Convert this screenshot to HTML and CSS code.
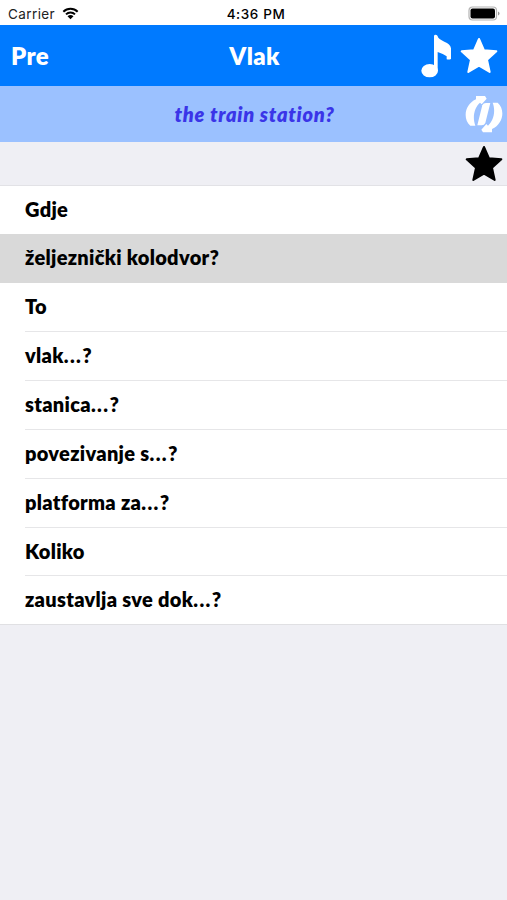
FILE: index.html
```
<!DOCTYPE html>
<html lang="hr">
<head>
    <meta charset="UTF-8">
    <meta name="viewport" content="width=device-width, initial-scale=1.0">
    <title>Vlak</title>
    <link rel="stylesheet" href="styles.css">
</head>
<body>
    <div class="status">
        <div class="carrier">
            <span>Carrier</span>
            <svg class="wifi" viewBox="0 0 51 39">
                <path d="M4 14a31 31 0 0 1 43 0M12 22a19 19 0 0 1 27 0" fill="none" stroke="#000" stroke-width="6"/>
                <path d="M25.500 37l-9-9a13 13 0 0 1 18 0z"/>
            </svg>
        </div>
        <span class="time">4:36 PM</span>
        <svg class="battery" viewBox="0 0 32 15">
            <rect x="1" y="1" width="27.500" height="13" rx="3.500" fill="#fff" stroke="#b4b4b4" stroke-width="1.200"/>
            <rect x="2.500" y="2.500" width="24.500" height="10" rx="2"/>
            <path d="M30 5.500v4q1.500-.5 1.500-2t-1.500-2z" fill="#999"/>
        </svg>
    </div>

    <header class="navbar">
        <span class="back">Pre</span>
        <h1>Vlak</h1>
        <div class="actions">
            <svg class="note" viewBox="40 104 93 132">
                <ellipse cx="66" cy="214" rx="25" ry="20"/>
                <path d="M79 110q0-4 5-4t6 5q2 9 20 16 18 6 20 20v32q-6 3-13 1v-9q-10-8-27-13v57H79z"/>
            </svg>
            <svg class="star" viewBox="0 0 114 114">
                <path d="M57 6l15 34 37 3-28 25 8 37-32-19-32 19 8-37L5 43l37-3z"/>
            </svg>
        </div>
    </header>

    <div class="phrase">
        <span>the train station?</span>
        <svg class="sync" viewBox="174 31 114 114">
            <path d="M207 34h27l5 8-15 17-5-5c-16 14-24 42-14 69h-15c-23-20-18-63 17-79z"/>
            <path d="M255 143h-27l-5-8 15-17 5 5c16-14 24-42 14-69h15c23 20 18 63-17 79z"/>
            <path d="M226 62q3-7 11-7h13l-15 60q-3 7-11 7h-13z"/>
        </svg>
    </div>

    <div class="toolbar">
        <svg class="star dark" viewBox="0 0 114 114">
            <path d="M57 6l15 34 37 3-28 25 8 37-32-19-32 19 8-37L5 43l37-3z"/>
        </svg>
    </div>

    <ul class="list">
        <li><div>Gdje</div></li>
        <li class="selected"><div>željeznički kolodvor?</div></li>
        <li><div>To</div></li>
        <li><div>vlak<span class="dots">...</span>?</div></li>
        <li><div>stanica<span class="dots">...</span>?</div></li>
        <li><div>povezivanje s<span class="dots">...</span>?</div></li>
        <li><div>platforma za<span class="dots">...</span>?</div></li>
        <li><div>Koliko</div></li>
        <li><div>zaustavlja sve dok<span class="dots">...</span>?</div></li>
    </ul>
</body>
</html>
```
FILE: styles.css
```
* {
    box-sizing: border-box;
}

body {
    margin: 0;
    height: 900px;
    background-color: #efeff4;
    font-family: Lato, sans-serif;
    font-weight: 800;
    overflow: hidden;
}

.status {
    display: grid;
    grid-template-columns: 1fr auto 1fr;
    align-items: center;
    height: 25px;
    padding: 2px 7px 0 8px;
    background-color: #fff;
    font-family: Inter, sans-serif;
    font-size: 13.5px;
    font-weight: 400;
}

.carrier {
    display: flex;
    align-items: center;
    gap: 7px;
    color: #222;
    letter-spacing: 0.4px;
}

.wifi {
    width: 17px;
    height: 13px;
}

.time {
    padding-left: 4px;
    font-weight: 500;
    letter-spacing: 0.6px;
}

.battery {
    width: 32px;
    height: 15px;
    justify-self: end;
}

.navbar {
    display: grid;
    grid-template-columns: 1fr auto 1fr;
    align-items: center;
    height: 61px;
    padding: 0 9px 0 11px;
    background-color: #007aff;
    color: #fff;
    font-size: 24px;
    letter-spacing: 0.3px;
}

.navbar h1 {
    margin: 0;
    font-size: 24px;
    font-weight: 800;
}

.actions {
    display: flex;
    justify-content: flex-end;
    align-items: center;
    gap: 8px;
    padding-top: 1px;
}

svg {
    display: block;
}

.note {
    width: 31px;
    height: 44px;
    fill: #fff;
}

.star {
    width: 38px;
    height: 38px;
    fill: #fff;
    stroke: #fff;
    stroke-width: 6;
    stroke-linejoin: round;
}

.phrase {
    display: grid;
    grid-template-columns: 1fr auto 1fr;
    align-items: center;
    height: 56px;
    padding: 0 4px 0 6px;
    background-color: #9bc1ff;
    color: #3a35e8;
    font-size: 20px;
    font-style: italic;
    letter-spacing: 0.75px;
}

.phrase span {
    grid-column: 2;
    padding-bottom: 1px;
}

.sync {
    width: 38px;
    height: 38px;
    justify-self: end;
    fill: #fff;
}

.toolbar {
    display: flex;
    justify-content: flex-end;
    align-items: center;
    height: 44px;
    padding-right: 4px;
    border-bottom: 1px solid #e2e2e6;
}

.dark {
    fill: #000;
    stroke: #000;
}

.list {
    margin: 0;
    padding: 0;
    list-style: none;
    background-color: #fff;
    font-size: 20px;
    letter-spacing: 0.3px;
}

.list li {
    height: 48.9px;
    padding-left: 25px;
}

.list li div {
    height: 100%;
    line-height: 47.4px;
    border-bottom: 1px solid #e6e6e8;
}

.list .selected {
    background-color: #d9d9d9;
}

.list .selected div {
    border-color: #d9d9d9;
}

.list li:first-child {
    height: 48.2px;
}

.list li:first-child div {
    border-bottom: none;
}

.list li:last-child {
    border-bottom: 1px solid #e0e0e3;
}

.list li:last-child div {
    border-bottom: none;
}

.dots {
    letter-spacing: 1.4px;
}
```
